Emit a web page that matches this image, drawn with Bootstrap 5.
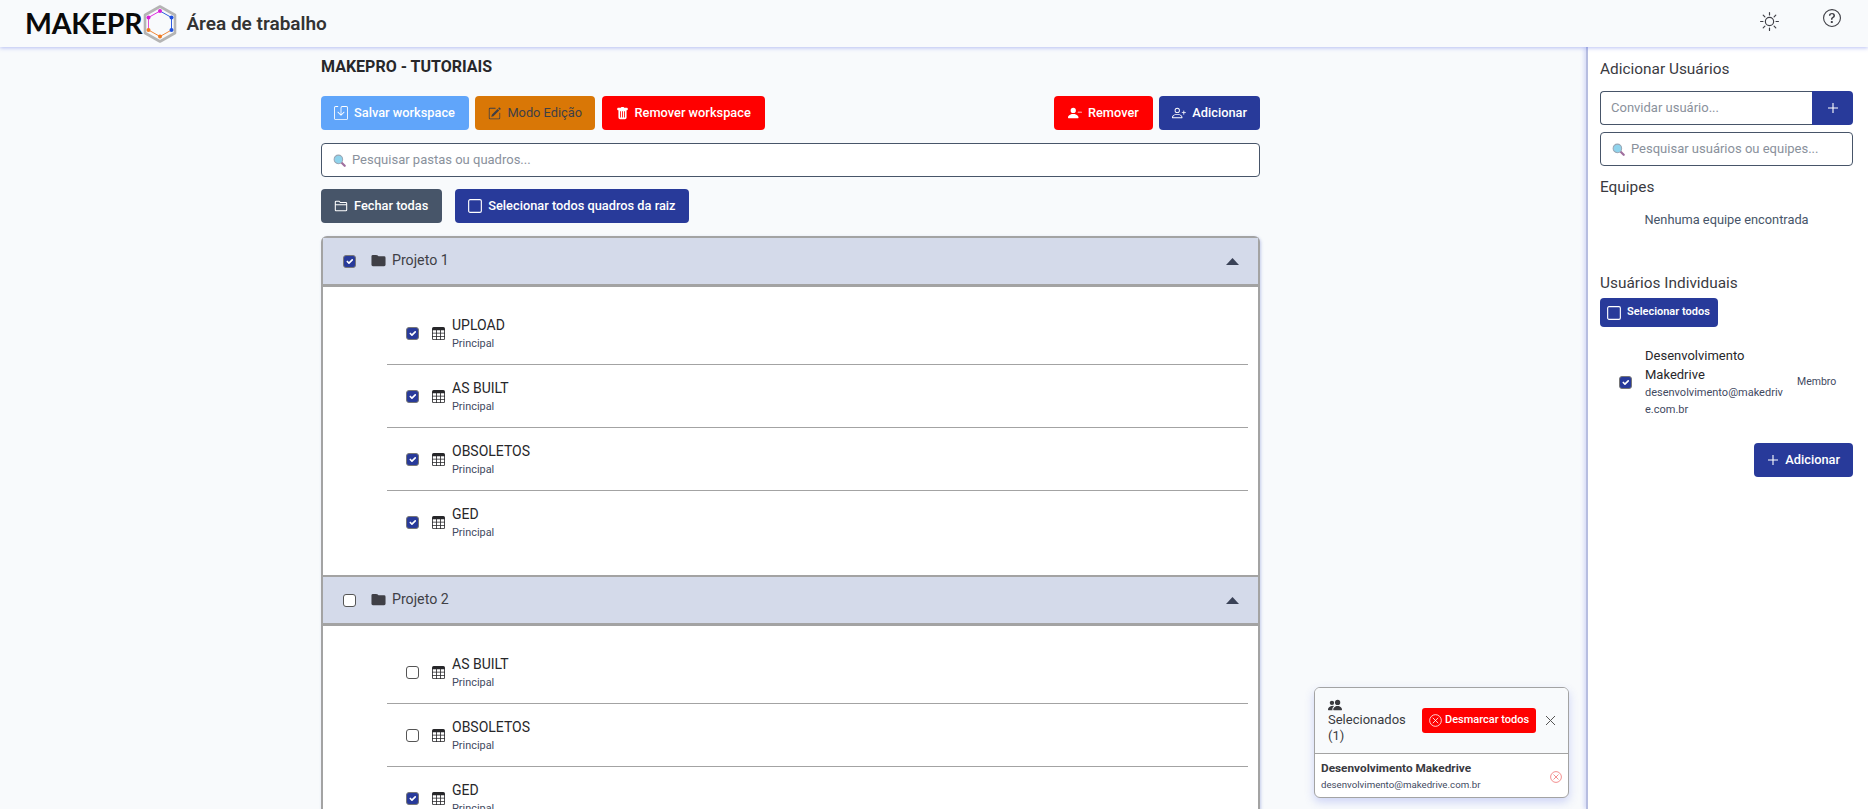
<!DOCTYPE html>
<html lang="pt-BR">
<head>
<meta charset="utf-8">
<title>Área de trabalho</title>
<link href="https://cdn.jsdelivr.net/npm/bootstrap@5.3.0/dist/css/bootstrap.min.css" rel="stylesheet">
<style>
html,body{height:100%;overflow:hidden}
body{background:#f8fafc;font-family:Roboto,"Liberation Sans",sans-serif;color:#27272a;font-size:14px;position:relative}
svg{display:block;flex:none}
.app-head{height:47px;background:#f8fafc;box-shadow:0 1px 4px rgba(80,100,230,.4);position:relative;z-index:2;padding-left:25px}
.logo-word{font-family:Lato,sans-serif;font-weight:700;font-size:28.5px;color:#0a0a0a;line-height:1;letter-spacing:-.2px}
.logo-hex{width:34px;height:38px;margin:0 9px 0 1px}
.head-title{font-size:19px;font-weight:600;color:#333;margin:0;line-height:1}
.head-ico-a{margin-right:44px;margin-top:-4px}
.head-ico-b{margin-right:27px;margin-top:-11px}
.page-body{height:762px}
.work-col{width:939px;margin-left:321px;padding-top:12px}
.work-title{font-size:16px;font-weight:700;margin:0 0 21px;line-height:16px;color:#27272a}
.act-btn{height:34px;font-size:12.8px;font-weight:500;padding:0 13px;border:0;border-radius:4px;color:#fff;display:inline-flex;align-items:center;gap:6px;white-space:nowrap}
.act-sky,.act-sky:hover{background:#60a5fa;color:#fff;padding-right:14px}
.act-amber,.act-amber:hover{background:#d97706;color:#3f3f46;font-weight:400}
.act-red,.act-red:hover{background:#f00;color:#fff;padding:0 14px}
.act-navy,.act-navy:hover{background:#283a9a;color:#fff}
.act-slate,.act-slate:hover{background:#475569;color:#fff;padding-right:14px}
.top-actions{gap:6.5px}
.search-box{height:34px;border:1px solid #475569;border-radius:4px;background:#fff;padding:0 11px;gap:6px;font-size:13px;color:#8a919c}
.search-box input{border:0;outline:0;flex:1;min-width:0;background:transparent;font-size:13px;padding:0;color:#27272a}
.search-box input::placeholder,.invite-field::placeholder{color:#8a919c;opacity:1}
.work-search{margin-top:13px}
.btn-line{margin-top:12px;gap:13px}
.tree-box{border:2px solid #a3a3a3;border-bottom:0;border-radius:6px 6px 0 0;margin-top:13px;box-shadow:1px 1px 3px rgba(80,100,200,.3);background:#fff}
.tree-head{height:49px;background:#d4daea;border-bottom:3px solid #a3a3a3;padding:0 19px 0 20px;font-size:14.2px;color:#3f3f46;gap:15px}
.tree-head .head-label{gap:6px}
.tree-sec + .tree-sec .tree-head{border-top:2px solid #a3a3a3;height:51px}
.tree-list{padding:15px 10px 21px 64px;list-style:none;margin:0}
.tree-item{height:63px;border-bottom:1px solid #a3a3a3;padding-left:19px;gap:13px}
.tree-item:last-child{border-bottom:0}
.tree-name{font-size:14px;line-height:16px;color:#27272a}
.tree-sub{font-size:10.9px;line-height:13px;margin-top:4px;color:#3f4a5f}
.tree-text{margin-left:-6px}
.form-check-input.mini-check{width:13px;height:13px;margin:0;border-color:#555;border-radius:3px;flex:none;box-shadow:none}
.form-check-input.mini-check:checked{background-color:#283a9a;border-color:#777}
.side-panel{width:282px;background:#fff;border-left:2px solid #b6bde0;box-shadow:-2px 0 4px rgba(80,100,230,.2);padding:13px 15px 0 12px}
.side-h{font-size:15.4px;line-height:18px;font-weight:400;color:#3a3a3f;margin:0}
.invite-row{height:34px;margin-top:13px}
.invite-field{flex:1;min-width:0;border:1px solid #475569;border-right:0;border-radius:4px 0 0 4px;padding:0 10px;font-size:13px;outline:0}
.invite-btn{width:41px;background:#283a9a;border:0;border-radius:0 4px 4px 0;padding:0;color:#fff}
.side-search{margin-top:7px}
.equipes-h{margin-top:12px}
.empty-msg{font-size:12.8px;line-height:16px;text-align:center;color:#475569;margin:16px 0 46px}
.sel-all{height:29px;background:#283a9a;color:#fff;border:0;border-radius:4px;font-size:11px;font-weight:600;padding:0 8px 0 7px;gap:6px;margin-top:6px}
.sel-all:hover{background:#283a9a;color:#fff}
.user-row{padding:19px 6px 0 19px;gap:13px}
.user-main{width:143px;flex:none}
.user-name{font-size:13px;line-height:19px;color:#27272a}
.user-mail{font-size:11px;line-height:17px;color:#3f4a5f;word-break:break-all}
.user-role{font-size:10.5px;color:#3f4a5f;margin-left:-4px}
.add-wrap{margin-top:25px}
.float-card{position:absolute;left:1314px;top:687px;width:255px;height:111px;border:1px solid #a3a3a3;border-radius:6px;background:#fff;box-shadow:0 4px 10px rgba(80,100,230,.25);z-index:5;overflow:hidden}
.float-head{height:66px;background:#f8fafc;border-bottom:1px solid #a3a3a3;padding:0 12px 0 13px}
.float-label{font-size:13px;line-height:16px;width:94px;flex:none;color:#3a3a3f}
.float-label span{display:block;width:80px}
.clear-btn{height:25px;background:#f00;color:#fff;border:0;border-radius:3px;font-size:11px;font-weight:500;padding:0 7px;gap:3px;white-space:nowrap}
.clear-btn:hover{background:#f00;color:#fff}
.float-body{padding:6px 6px}
.float-name{font-size:11.8px;font-weight:700;line-height:16px;color:#3a3a3f}
.float-mail{font-size:9.7px;line-height:16px;margin-top:1px;color:#3f4a5f}
.del-ico{color:#ef6b6b}
</style>
</head>
<body>
<svg width="0" height="0" class="position-absolute">
<defs>
<symbol id="i-table" viewBox="0 0 16 16"><path fill="currentColor" d="M0 2a2 2 0 0 1 2-2h12a2 2 0 0 1 2 2v12a2 2 0 0 1-2 2H2a2 2 0 0 1-2-2V2zm15 2h-4v3h4V4zm0 4h-4v3h4V8zm0 4h-4v3h3a1 1 0 0 0 1-1v-2zm-5 3v-3H6v3h4zm-5 0v-3H1v2a1 1 0 0 0 1 1h3zm-4-4h4V8H1v3zm0-4h4V4H1v3zm5-3v3h4V4H6zm4 4H6v3h4V8z"/></symbol>
<symbol id="i-folder" viewBox="0 0 16 16"><path fill="currentColor" d="M.5 3.5A1.5 1.5 0 0 1 2 2h3.6c.5 0 .9.2 1.2.5L8 3.5h6A1.5 1.5 0 0 1 15.5 5v7.5A1.5 1.5 0 0 1 14 14H2a1.5 1.5 0 0 1-1.5-1.5z"/></symbol>
<symbol id="i-lens" viewBox="0 0 14 14"><line x1="8.8" y1="8.8" x2="12.6" y2="12.6" stroke="#a06f9e" stroke-width="2.4" stroke-linecap="round"/><circle cx="5.8" cy="5.8" r="4.6" fill="#8fd3ec" stroke="#9aa6b4" stroke-width="1.1"/></symbol>
<symbol id="i-xc" viewBox="0 0 16 16"><path fill="none" stroke="currentColor" d="M8 .8a7.2 7.2 0 1 0 0 14.4A7.2 7.2 0 0 0 8 .8z"/><path fill="none" stroke="currentColor" stroke-linecap="round" d="M5 5l6 6M11 5l-6 6"/></symbol>
<symbol id="i-box" viewBox="0 0 16 16"><rect x=".75" y=".75" width="14.5" height="14.5" rx="1.6" fill="none" stroke="currentColor" stroke-width="1.3"/></symbol>
</defs>
</svg>

<header class="app-head d-flex align-items-center">
  <span class="logo-word">MAKEPR</span>
  <svg class="logo-hex" viewBox="0 0 34 38">
    <path d="M17 1.5 32 10v18L17 36.5 2 28V10z" fill="none" stroke="#b4b4b4" stroke-width="2.6" stroke-linejoin="round"/>
    <path d="M17 6 5.5 12.5" stroke="#e02ee0" stroke-width="1" fill="none"/>
    <path d="M17 6 28.5 12.5V25" stroke="#2f5ce0" stroke-width="1" fill="none"/>
    <path d="M5.5 12.5V25" stroke="#e04fd0" stroke-width="1" fill="none"/>
    <path d="M5.5 25 17 31.5 28.5 25" stroke="#f0873a" stroke-width="1" fill="none"/>
    <circle cx="17" cy="6" r="2" fill="#d81fd8"/><circle cx="5.5" cy="12.5" r="2" fill="#d81fd8"/><circle cx="28.5" cy="12.5" r="2" fill="#1f4fe0"/><circle cx="28.5" cy="25" r="2" fill="#1f4fe0"/><circle cx="5.5" cy="25" r="2" fill="#f07a20"/><circle cx="17" cy="31.5" r="2" fill="#f07a20"/>
  </svg>
  <h1 class="head-title">Área de trabalho</h1>
  <div class="ms-auto d-flex align-items-center">
    <svg class="head-ico-a" width="19" height="19" viewBox="0 0 16 16" fill="#3f3f46"><path d="M8 11a3 3 0 1 1 0-6 3 3 0 0 1 0 6zm0 1a4 4 0 1 0 0-8 4 4 0 0 0 0 8zM8 0a.5.5 0 0 1 .5.5v2a.5.5 0 0 1-1 0v-2A.5.5 0 0 1 8 0zm0 13a.5.5 0 0 1 .5.5v2a.5.5 0 0 1-1 0v-2A.5.5 0 0 1 8 13zm8-5a.5.5 0 0 1-.5.5h-2a.5.5 0 0 1 0-1h2a.5.5 0 0 1 .5.5zM3 8a.5.5 0 0 1-.5.5h-2a.5.5 0 0 1 0-1h2A.5.5 0 0 1 3 8zm10.657-5.657a.5.5 0 0 1 0 .707l-1.414 1.415a.5.5 0 1 1-.707-.708l1.414-1.414a.5.5 0 0 1 .707 0zm-9.193 9.193a.5.5 0 0 1 0 .707L3.05 13.657a.5.5 0 0 1-.707-.707l1.414-1.414a.5.5 0 0 1 .707 0zm9.193 2.121a.5.5 0 0 1-.707 0l-1.414-1.414a.5.5 0 0 1 .707-.707l1.414 1.414a.5.5 0 0 1 0 .707zM4.464 4.465a.5.5 0 0 1-.707 0L2.343 3.05a.5.5 0 1 1 .707-.707l1.414 1.414a.5.5 0 0 1 0 .708z"/></svg>
    <svg class="head-ico-b" width="18" height="18" viewBox="0 0 16 16" fill="#3f3f46"><path d="M8 15A7 7 0 1 1 8 1a7 7 0 0 1 0 14zm0 1A8 8 0 1 0 8 0a8 8 0 0 0 0 16z"/><path d="M5.255 5.786a.237.237 0 0 0 .241.247h.825c.138 0 .248-.113.266-.25.09-.656.54-1.134 1.342-1.134.686 0 1.314.343 1.314 1.168 0 .635-.374.927-.965 1.371-.673.489-1.206 1.06-1.168 1.987l.003.217a.25.25 0 0 0 .25.246h.811a.25.25 0 0 0 .25-.25v-.105c0-.718.273-.927 1.01-1.486.609-.463 1.244-.977 1.244-2.056 0-1.511-1.276-2.241-2.673-2.241-1.267 0-2.655.59-2.75 2.286zm1.557 5.763c0 .533.425.927 1.01.927.609 0 1.028-.394 1.028-.927 0-.552-.42-.94-1.029-.94-.584 0-1.009.388-1.009.94z"/></svg>
  </div>
</header>

<div class="page-body d-flex">
  <main class="flex-grow-1 overflow-hidden">
    <div class="work-col">
      <h2 class="work-title">MAKEPRO - TUTORIAIS</h2>
      <div class="d-flex top-actions">
        <button class="btn act-btn act-sky"><svg width="14" height="14" viewBox="0 0 16 16" fill="currentColor"><path d="M2 1a1 1 0 0 0-1 1v12a1 1 0 0 0 1 1h12a1 1 0 0 0 1-1V2a1 1 0 0 0-1-1H9.5a1 1 0 0 0-1 1v7.293l2.646-2.647a.5.5 0 0 1 .708.708l-3.5 3.5a.5.5 0 0 1-.708 0l-3.5-3.5a.5.5 0 1 1 .708-.708L7.5 9.293V2a2 2 0 0 1 2-2H14a2 2 0 0 1 2 2v12a2 2 0 0 1-2 2H2a2 2 0 0 1-2-2V2a2 2 0 0 1 2-2h2.5a.5.5 0 0 1 0 1H2z"/></svg>Salvar workspace</button>
        <button class="btn act-btn act-amber"><svg width="13" height="13" viewBox="0 0 16 16" fill="currentColor"><path d="M15.502 1.94a.5.5 0 0 1 0 .706L14.459 3.69l-2-2L13.502.646a.5.5 0 0 1 .707 0l1.293 1.293zm-1.75 2.456-2-2L4.939 9.21a.5.5 0 0 0-.121.196l-.805 2.414a.25.25 0 0 0 .316.316l2.414-.805a.5.5 0 0 0 .196-.12l6.813-6.814z"/><path fill-rule="evenodd" d="M1 13.5A1.5 1.5 0 0 0 2.5 15h11a1.5 1.5 0 0 0 1.5-1.5v-6a.5.5 0 0 0-1 0v6a.5.5 0 0 1-.5.5h-11a.5.5 0 0 1-.5-.5v-11a.5.5 0 0 1 .5-.5H9a.5.5 0 0 0 0-1H2.5A1.5 1.5 0 0 0 1 2.5v11z"/></svg>Modo Edição</button>
        <button class="btn act-btn act-red"><svg width="13" height="13" viewBox="0 0 16 16" fill="currentColor"><path d="M2.5 1a1 1 0 0 0-1 1v1a1 1 0 0 0 1 1H3v9a2 2 0 0 0 2 2h6a2 2 0 0 0 2-2V4h.5a1 1 0 0 0 1-1V2a1 1 0 0 0-1-1H10a1 1 0 0 0-1-1H7a1 1 0 0 0-1 1H2.5zm3 4a.5.5 0 0 1 .5.5v7a.5.5 0 0 1-1 0v-7a.5.5 0 0 1 .5-.5zM8 5a.5.5 0 0 1 .5.5v7a.5.5 0 0 1-1 0v-7A.5.5 0 0 1 8 5zm3 .5v7a.5.5 0 0 1-1 0v-7a.5.5 0 0 1 1 0z"/></svg>Remover workspace</button>
        <button class="btn act-btn act-red ms-auto"><svg width="14" height="14" viewBox="0 0 16 16" fill="currentColor"><path d="M11 7a.5.5 0 0 1 .5-.5h4a.5.5 0 0 1 0 1h-4A.5.5 0 0 1 11 7z"/><path d="M1 14s-1 0-1-1 1-4 6-4 6 3 6 4-1 1-1 1H1zm5-6a3 3 0 1 0 0-6 3 3 0 0 0 0 6z"/></svg>Remover</button>
        <button class="btn act-btn act-navy"><svg width="14" height="14" viewBox="0 0 16 16" fill="currentColor"><path d="M6 8a3 3 0 1 0 0-6 3 3 0 0 0 0 6zm2-3a2 2 0 1 1-4 0 2 2 0 0 1 4 0zm4 8c0 1-1 1-1 1H1s-1 0-1-1 1-4 6-4 6 3 6 4zm-1-.004c-.001-.246-.154-.986-.832-1.664C9.516 10.68 8.289 10 6 10c-2.29 0-3.516.68-4.168 1.332-.678.678-.83 1.418-.832 1.664h10z"/><path fill-rule="evenodd" d="M13.5 5a.5.5 0 0 1 .5.5V7h1.5a.5.5 0 0 1 0 1H14v1.5a.5.5 0 0 1-1 0V8h-1.5a.5.5 0 0 1 0-1H13V5.5a.5.5 0 0 1 .5-.5z"/></svg>Adicionar</button>
      </div>
      <div class="search-box work-search d-flex align-items-center">
        <svg width="13" height="13"><use href="#i-lens"/></svg>
        <input type="text" placeholder="Pesquisar pastas ou quadros...">
      </div>
      <div class="d-flex btn-line">
        <button class="btn act-btn act-slate"><svg width="14" height="14" viewBox="0 0 16 16" fill="none" stroke="currentColor" stroke-width="1.2"><path d="M1.5 12.5v-9A1 1 0 0 1 2.5 2.5h3.3l1.5 1.5h6.2a1 1 0 0 1 1 1v7.5a1 1 0 0 1-1 1H2.5a1 1 0 0 1-1-1zM1.5 6.5h13"/></svg>Fechar todas</button>
        <button class="btn act-btn act-navy"><svg width="14" height="14"><use href="#i-box"/></svg>Selecionar todos quadros da raiz</button>
      </div>

      <div class="tree-box">
        <section class="tree-sec">
          <div class="tree-head d-flex align-items-center">
            <input class="form-check-input mini-check" type="checkbox" checked>
            <span class="head-label d-flex align-items-center"><svg width="15" height="15"><use href="#i-folder"/></svg>Projeto 1</span>
            <svg class="ms-auto" width="13" height="7" viewBox="0 0 13 7"><path d="M6.5 0 13 7H0z" fill="#3a4257"/></svg>
          </div>
          <ul class="tree-list">
            <li class="tree-item d-flex align-items-center"><input class="form-check-input mini-check" type="checkbox" checked><svg width="13" height="13"><use href="#i-table"/></svg><div class="tree-text"><div class="tree-name">UPLOAD</div><div class="tree-sub">Principal</div></div></li>
            <li class="tree-item d-flex align-items-center"><input class="form-check-input mini-check" type="checkbox" checked><svg width="13" height="13"><use href="#i-table"/></svg><div class="tree-text"><div class="tree-name">AS BUILT</div><div class="tree-sub">Principal</div></div></li>
            <li class="tree-item d-flex align-items-center"><input class="form-check-input mini-check" type="checkbox" checked><svg width="13" height="13"><use href="#i-table"/></svg><div class="tree-text"><div class="tree-name">OBSOLETOS</div><div class="tree-sub">Principal</div></div></li>
            <li class="tree-item d-flex align-items-center"><input class="form-check-input mini-check" type="checkbox" checked><svg width="13" height="13"><use href="#i-table"/></svg><div class="tree-text"><div class="tree-name">GED</div><div class="tree-sub">Principal</div></div></li>
          </ul>
        </section>
        <section class="tree-sec">
          <div class="tree-head d-flex align-items-center">
            <input class="form-check-input mini-check" type="checkbox">
            <span class="head-label d-flex align-items-center"><svg width="15" height="15"><use href="#i-folder"/></svg>Projeto 2</span>
            <svg class="ms-auto" width="13" height="7" viewBox="0 0 13 7"><path d="M6.5 0 13 7H0z" fill="#3a4257"/></svg>
          </div>
          <ul class="tree-list">
            <li class="tree-item d-flex align-items-center"><input class="form-check-input mini-check" type="checkbox"><svg width="13" height="13"><use href="#i-table"/></svg><div class="tree-text"><div class="tree-name">AS BUILT</div><div class="tree-sub">Principal</div></div></li>
            <li class="tree-item d-flex align-items-center"><input class="form-check-input mini-check" type="checkbox"><svg width="13" height="13"><use href="#i-table"/></svg><div class="tree-text"><div class="tree-name">OBSOLETOS</div><div class="tree-sub">Principal</div></div></li>
            <li class="tree-item d-flex align-items-center"><input class="form-check-input mini-check" type="checkbox" checked><svg width="13" height="13"><use href="#i-table"/></svg><div class="tree-text"><div class="tree-name">GED</div><div class="tree-sub">Principal</div></div></li>
          </ul>
        </section>
      </div>
    </div>
  </main>

  <aside class="side-panel flex-shrink-0">
    <h3 class="side-h">Adicionar Usuários</h3>
    <div class="invite-row d-flex">
      <input class="invite-field" type="text" placeholder="Convidar usuário...">
      <button class="invite-btn d-flex align-items-center justify-content-center"><svg width="12" height="12" viewBox="0 0 12 12"><path d="M6 1v10M1 6h10" stroke="currentColor" stroke-width="1.1"/></svg></button>
    </div>
    <div class="search-box side-search d-flex align-items-center">
      <svg width="13" height="13"><use href="#i-lens"/></svg>
      <input type="text" placeholder="Pesquisar usuários ou equipes...">
    </div>
    <h3 class="side-h equipes-h">Equipes</h3>
    <p class="empty-msg">Nenhuma equipe encontrada</p>
    <h3 class="side-h">Usuários Individuais</h3>
    <button class="btn sel-all d-inline-flex align-items-center"><svg width="14" height="14"><use href="#i-box"/></svg>Selecionar todos</button>
    <div class="user-row d-flex align-items-center">
      <input class="form-check-input mini-check" type="checkbox" checked>
      <div class="user-main">
        <div class="user-name">Desenvolvimento Makedrive</div>
        <div class="user-mail">desenvolvimento@makedrive.com.br</div>
      </div>
      <span class="user-role">Membro</span>
    </div>
    <div class="add-wrap d-flex justify-content-end">
      <button class="btn act-btn act-navy"><svg width="12" height="12" viewBox="0 0 12 12"><path d="M6 1v10M1 6h10" stroke="currentColor" stroke-width="1.1"/></svg>Adicionar</button>
    </div>
  </aside>
</div>

<div class="float-card">
  <div class="float-head d-flex align-items-center">
    <div class="float-label">
      <svg width="14" height="14" viewBox="0 0 16 16" fill="#3a3a3f"><path d="M7 14s-1 0-1-1 1-4 5-4 5 3 5 4-1 1-1 1H7zm4-6a3 3 0 1 0 0-6 3 3 0 0 0 0 6z"/><path d="M5.216 14A2.238 2.238 0 0 1 5 13c0-1.355.68-2.75 1.936-3.72A6.325 6.325 0 0 0 5 9c-4 0-5 3-5 4s1 1 1 1h4.216z"/><path d="M4.5 8a2.5 2.5 0 1 0 0-5 2.5 2.5 0 0 0 0 5z"/></svg>
      <span>Selecionados (1)</span>
    </div>
    <button class="btn clear-btn d-inline-flex align-items-center"><svg width="13" height="13"><use href="#i-xc"/></svg>Desmarcar todos</button>
    <svg class="ms-auto" width="11" height="11" viewBox="0 0 11 11"><path d="M1 1l9 9M10 1l-9 9" stroke="#555" stroke-width="1"/></svg>
  </div>
  <div class="float-body d-flex align-items-center justify-content-between">
    <div>
      <div class="float-name">Desenvolvimento Makedrive</div>
      <div class="float-mail">desenvolvimento@makedrive.com.br</div>
    </div>
    <svg class="del-ico" width="12" height="12"><use href="#i-xc"/></svg>
  </div>
</div>
</body>
</html>
